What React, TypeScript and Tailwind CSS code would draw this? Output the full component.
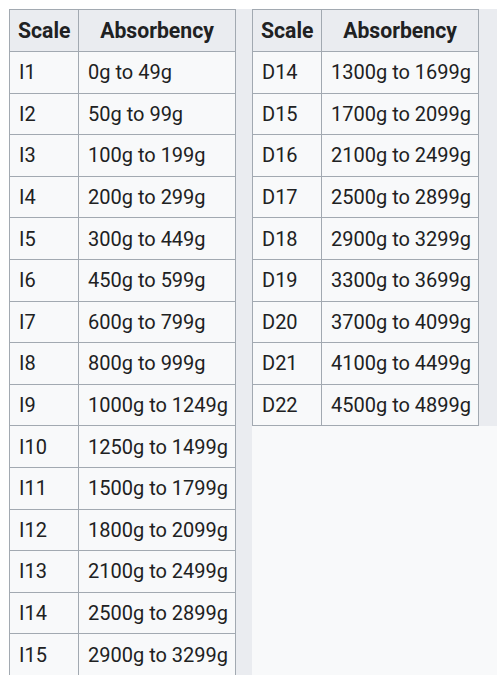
import React from "react";

const left: [string, string][] = [
  ["I1", "0g to 49g"],
  ["I2", "50g to 99g"],
  ["I3", "100g to 199g"],
  ["I4", "200g to 299g"],
  ["I5", "300g to 449g"],
  ["I6", "450g to 599g"],
  ["I7", "600g to 799g"],
  ["I8", "800g to 999g"],
  ["I9", "1000g to 1249g"],
  ["I10", "1250g to 1499g"],
  ["I11", "1500g to 1799g"],
  ["I12", "1800g to 2099g"],
  ["I13", "2100g to 2499g"],
  ["I14", "2500g to 2899g"],
  ["I15", "2900g to 3299g"],
];

const right: [string, string][] = [
  ["D14", "1300g to 1699g"],
  ["D15", "1700g to 2099g"],
  ["D16", "2100g to 2499g"],
  ["D17", "2500g to 2899g"],
  ["D18", "2900g to 3299g"],
  ["D19", "3300g to 3699g"],
  ["D20", "3700g to 4099g"],
  ["D21", "4100g to 4499g"],
  ["D22", "4500g to 4899g"],
];

function Table({ rows, w }: { rows: [string, string][]; w: string }) {
  return (
    <table className={`border-collapse table-fixed text-[#202122] shrink-0 ${w}`} style={{ fontFamily: "Roboto, 'Noto Sans', sans-serif" }}>
      <colgroup>
        <col className="w-[69px]" />
        <col />
      </colgroup>
      <thead>
        <tr>
          <th className="border border-[#a2a9b1] bg-[#eaecf0] h-[42px] px-[8px] py-0 text-center font-bold text-[21.2px] leading-[32px]">Scale</th>
          <th className="border border-[#a2a9b1] bg-[#eaecf0] h-[42px] px-[8px] py-0 text-center font-bold text-[21.2px] leading-[32px]">Absorbency</th>
        </tr>
      </thead>
      <tbody>
        {rows.map(([a, b]) => (
          <tr key={a}>
            <td className="border border-[#a2a9b1] bg-[#f8f9fa] h-[41.6px] px-[9px] py-0 text-left text-[20px] leading-[32px]">{a}</td>
            <td className="border border-[#a2a9b1] bg-[#f8f9fa] h-[41.6px] px-[9px] py-0 text-left text-[20px] leading-[32px] whitespace-nowrap">{b}</td>
          </tr>
        ))}
      </tbody>
    </table>
  );
}

export default function App() {
  return (
    <div className="bg-white pl-[9px] pt-[9px] h-[675px] overflow-hidden">
      <div className="flex bg-[#f8f9fa] h-full">
        <div className="self-start">
          <Table rows={left} w="w-[227px]" />
        </div>
        <div className="w-[16px] shrink-0 bg-[#eaecf0]" />
        <div className="flex-1 flex flex-col">
          <div className="flex">
            <Table rows={right} w="w-[227px]" />
            <div className="flex-1 bg-[#eaecf0]" />
          </div>
        </div>
      </div>
    </div>
  );
}
